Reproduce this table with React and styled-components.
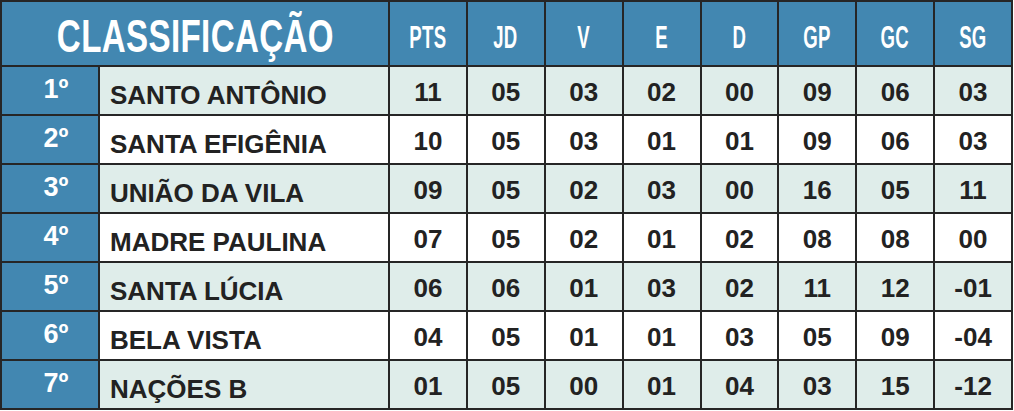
import React from "react";
import styled, { createGlobalStyle } from "styled-components";

const GlobalStyle = createGlobalStyle`
  html, body {
    margin: 0;
    padding: 0;
    background: #ffffff;
  }
  body {
    font-family: "Liberation Sans", Arial, sans-serif;
  }
`;

const Table = styled.div`
  width: 1013px;
  box-sizing: border-box;
  display: grid;
  grid-template-columns: 96px 288px repeat(8, 1fr);
  grid-template-rows: 63px repeat(7, 47px);
  gap: 2px;
  padding: 2px;
  background: #262626;
`;

const HeadCell = styled.div`
  background: #4287b1;
  color: #ffffff;
  display: flex;
  align-items: center;
  justify-content: center;
  padding-top: ${({ $title }) => ($title ? "4px" : "7px")};
  grid-column: ${({ $title }) => ($title ? "span 2" : "auto")};
  overflow: hidden;
`;

const Squeeze = styled.span`
  display: inline-block;
  font-weight: 700;
  font-size: ${({ $title }) => ($title ? "46px" : "31px")};
  line-height: 1;
  letter-spacing: 0.5px;
  transform: scaleX(${({ $title }) => ($title ? 0.72 : 0.6)});
  white-space: nowrap;
`;

const PosCell = styled.div`
  background: #4287b1;
  color: #ffffff;
  font-weight: 700;
  font-size: 27px;
  display: flex;
  align-items: center;
  justify-content: center;
  padding-left: 12px;
  padding-bottom: 2px;
`;

const NameCell = styled.div`
  background: ${({ $alt }) => ($alt ? "#dfedea" : "#ffffff")};
  color: #222222;
  font-weight: 700;
  font-size: 26px;
  display: flex;
  align-items: center;
  padding: 9px 0 0 10px;
  white-space: nowrap;
`;

const NumCell = styled.div`
  background: ${({ $alt }) => ($alt ? "#dfedea" : "#ffffff")};
  color: #222222;
  font-weight: 700;
  font-size: 26px;
  display: flex;
  align-items: center;
  justify-content: center;
  padding-top: 3px;
`;

const columns = ["PTS", "JD", "V", "E", "D", "GP", "GC", "SG"];

const teams = [
  ["SANTO ANTÔNIO", "11", "05", "03", "02", "00", "09", "06", "03"],
  ["SANTA EFIGÊNIA", "10", "05", "03", "01", "01", "09", "06", "03"],
  ["UNIÃO DA VILA", "09", "05", "02", "03", "00", "16", "05", "11"],
  ["MADRE PAULINA", "07", "05", "02", "01", "02", "08", "08", "00"],
  ["SANTA LÚCIA", "06", "06", "01", "03", "02", "11", "12", "-01"],
  ["BELA VISTA", "04", "05", "01", "01", "03", "05", "09", "-04"],
  ["NAÇÕES B", "01", "05", "00", "01", "04", "03", "15", "-12"],
];

export default function App() {
  return (
    <>
      <GlobalStyle />
      <Table>
        <HeadCell $title>
          <Squeeze $title>CLASSIFICAÇÃO</Squeeze>
        </HeadCell>
        {columns.map((c) => (
          <HeadCell key={c}>
            <Squeeze>{c}</Squeeze>
          </HeadCell>
        ))}
        {teams.map(([name, ...stats], i) => {
          const alt = i % 2 === 0;
          return (
            <React.Fragment key={name}>
              <PosCell>{i + 1}º</PosCell>
              <NameCell $alt={alt}>{name}</NameCell>
              {stats.map((s, j) => (
                <NumCell key={j} $alt={alt}>
                  {s}
                </NumCell>
              ))}
            </React.Fragment>
          );
        })}
      </Table>
    </>
  );
}
